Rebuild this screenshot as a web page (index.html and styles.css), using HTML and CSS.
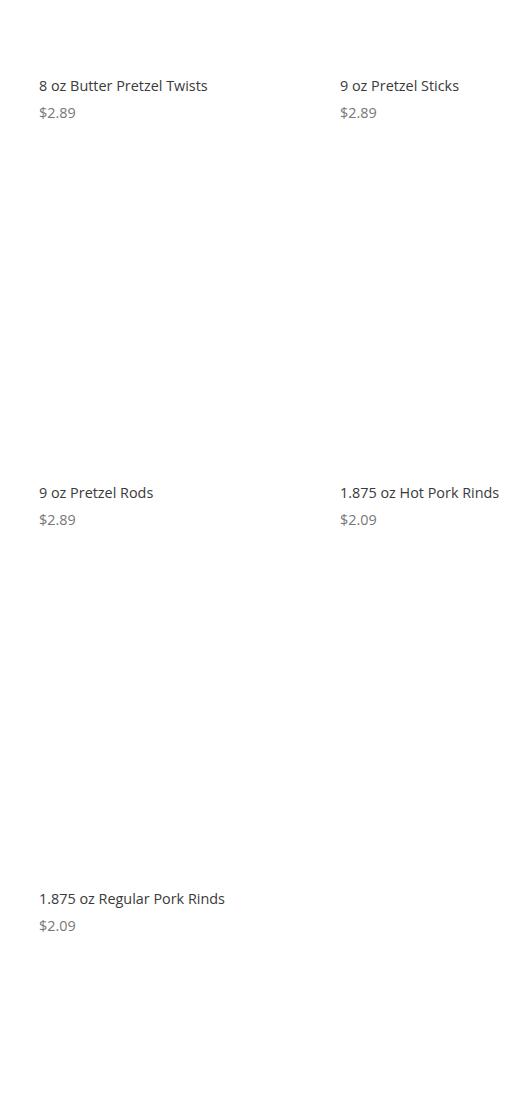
FILE: index.html
```html
<html>
  <head>
    <title>Snacks</title>
    <meta name="viewport" content="width=device-width, initial-scale=1" />
    <link rel="stylesheet" href="styles.css">
  </head>
  <body>
    <main>
      <div class="products">
        <div class="product">
          <div class="thumbnail"></div>
          <div class="title">8 oz Butter Pretzel Twists</div>
          <div class="price">$2.89</div>
        </div>
        <div class="product">
          <div class="thumbnail"></div>
          <div class="title">9 oz Pretzel Sticks</div>
          <div class="price">$2.89</div>
        </div>
        <div class="product">
          <div class="thumbnail"></div>
          <div class="title">9 oz Pretzel Rods</div>
          <div class="price">$2.89</div>
        </div>
        <div class="product">
          <div class="thumbnail"></div>
          <div class="title">1.875 oz Hot Pork Rinds</div>
          <div class="price">$2.09</div>
        </div>
        <div class="product">
          <div class="thumbnail"></div>
          <div class="title">1.875 oz Regular Pork Rinds</div>
          <div class="price">$2.09</div>
        </div>
      </div>
    </main>
  </body>
</html>
```
FILE: styles.css
```css
html, body {
  margin: 0;
  overflow-x: hidden;
  background-color: #fff;
  font-family: 'Open Sans', sans-serif;
}

main {
  padding: 0 0 0 39px;
}

.products {
  display: grid;
  grid-template-columns: 285px minmax(0, 1fr);
  column-gap: 16px;
  row-gap: 17.5px;
  margin-top: -266px;
}

.product .thumbnail {
  height: 330px;
  background-color: #fff;
}

.product .title {
  margin-top: 12px;
  font-size: 14.4px;
  line-height: 20px;
  color: #3a3a3a;
  white-space: nowrap;
}

.product .price {
  margin-top: 7px;
  font-size: 14.4px;
  line-height: 20px;
  color: #777;
}
```
